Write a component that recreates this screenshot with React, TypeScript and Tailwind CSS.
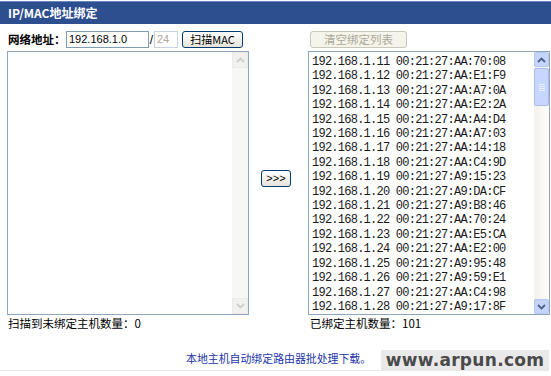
import React from "react";

const rows: [string, string][] = [
  ["11", "AA:70:08"],
  ["12", "AA:E1:F9"],
  ["13", "AA:A7:0A"],
  ["14", "AA:E2:2A"],
  ["15", "AA:A4:D4"],
  ["16", "AA:A7:03"],
  ["17", "AA:14:18"],
  ["18", "AA:C4:9D"],
  ["19", "A9:15:23"],
  ["20", "A9:DA:CF"],
  ["21", "A9:B8:46"],
  ["22", "AA:70:24"],
  ["23", "AA:E5:CA"],
  ["24", "AA:E2:00"],
  ["25", "A9:95:48"],
  ["26", "A9:59:E1"],
  ["27", "AA:C4:98"],
  ["28", "A9:17:8F"],
];

function Chevron({ up, color }: { up: boolean; color: string }) {
  return (
    <svg width="9" height="6" viewBox="0 0 9 6">
      <path
        d={up ? "M1 5 L4.5 1.5 L8 5" : "M1 1 L4.5 4.5 L8 1"}
        fill="none"
        stroke={color}
        strokeWidth="1.8"
      />
    </svg>
  );
}

export default function App() {
  return (
    <div className="relative w-[551px] h-[376px] overflow-hidden bg-white text-black font-['Noto_Sans_CJK_SC','Liberation_Sans',sans-serif]">
      {/* header */}
      <div className="mt-[1px] h-[23px] bg-[#2d4e8f] border-t border-[#6686c4] flex items-center pl-[8px]">
        <span className="text-white font-bold text-[12px] leading-none">IP/MAC地址绑定</span>
      </div>

      <div className="flex pl-[7px] pt-[7px]">
        {/* left column */}
        <div className="w-[242px] flex flex-col">
          <div className="h-[17px] flex items-center">
            <span className="pl-[1px] w-[59px] text-[11.5px] font-bold leading-none">网络地址：</span>
            <div className="w-[83px] h-[17px] border border-[#7f9db9] bg-white flex items-center pl-[2px] text-[11px] leading-none font-['Liberation_Sans',sans-serif]">
              192.168.1.0
            </div>
            <span className="w-[5px] text-[12px] leading-none text-center font-['Liberation_Sans',sans-serif]">/</span>
            <div className="w-[24px] h-[17px] border border-[#c9d3dd] bg-white flex items-center pl-[2px] text-[11px] leading-none text-[#aca899] font-['Liberation_Sans',sans-serif]">
              24
            </div>
            <div className="ml-[4px] w-[61px] h-[17px] rounded-[3px] border border-[#003c74] bg-gradient-to-b from-white to-[#e6e4da] flex items-center justify-center text-[11px] leading-none">
              扫描MAC
            </div>
          </div>
          <div className="mt-[3px] h-[264px] border border-[#8ea6bf] bg-white flex justify-end">
            <div className="w-[16px] h-full bg-[#f7f7f4] flex flex-col justify-between">
              <div className="h-[16px] bg-[#f1f1ed] border border-[#ecebe6] flex items-center justify-center">
                <Chevron up color="#cfcfc8" />
              </div>
              <div className="h-[16px] bg-[#f1f1ed] border border-[#ecebe6] flex items-center justify-center">
                <Chevron up={false} color="#cfcfc8" />
              </div>
            </div>
          </div>
          <div className="mt-[1px] pl-[1px] text-[11.5px] leading-[14px]">扫描到未绑定主机数量：0</div>
        </div>

        {/* middle */}
        <div className="w-[59px] pl-[12px] pt-[139px]">
          <div className="w-[30px] h-[17px] rounded-[3px] border border-[#003c74] bg-gradient-to-b from-white to-[#e6e4da] flex items-center justify-center text-[11px] leading-none font-['Liberation_Sans',sans-serif]">
            &gt;&gt;&gt;
          </div>
        </div>

        {/* right column */}
        <div className="w-[242px] flex flex-col">
          <div className="h-[17px] pl-[2px]">
            <div className="w-[97px] h-[17px] rounded-[3px] border border-[#c9c7ba] bg-[#f5f4ea] flex items-center justify-center text-[11.5px] leading-none text-[#aca899]">
              清空绑定列表
            </div>
          </div>
          <div className="mt-[3px] h-[264px] border border-[#8ea6bf] bg-white flex">
            <div className="flex-1 min-w-0 pl-[3px] pt-[3px] overflow-hidden text-[#1a1a1a] font-['Liberation_Mono','DejaVu_Sans_Mono',monospace]">
              {rows.map(([ip, mac]) => (
                <div key={ip} className="whitespace-pre text-[12px] tracking-[-0.75px] leading-[14.4px]">{`192.168.1.${ip} 00:21:27:${mac}`}</div>
              ))}
            </div>
            <div className="w-[15px] shrink-0 h-full bg-gradient-to-r from-[#f3f1ea] to-[#fefefb] flex flex-col">
              <div className="h-[15px] rounded-[2px] bg-[#c4d4fb] border border-[#b4c6f2] flex items-center justify-center">
                <Chevron up color="#4d6185" />
              </div>
              <div className="mt-[1px] h-[38px] rounded-[2px] bg-[#c6d6fc] border border-[#a9bdea] flex flex-col items-center justify-center gap-[1px]">
                <div className="w-[6px] h-[1px] bg-[#e8eefe]" />
                <div className="w-[6px] h-[1px] bg-[#e8eefe]" />
                <div className="w-[6px] h-[1px] bg-[#e8eefe]" />
                <div className="w-[6px] h-[1px] bg-[#e8eefe]" />
              </div>
              <div className="flex-1" />
              <div className="h-[15px] rounded-[2px] bg-[#c4d4fb] border border-[#b4c6f2] flex items-center justify-center">
                <Chevron up={false} color="#4d6185" />
              </div>
            </div>
          </div>
          <div className="mt-[1px] pl-[2px] text-[11.5px] leading-[14px]">已绑定主机数量：101</div>
        </div>
      </div>

      {/* bottom link */}
      <div className="mt-[21px] pl-[186px] text-[10.9px] leading-[14px] text-[#2233aa]">
        本地主机自动绑定路由器批处理下载。
      </div>
      <div className="mt-[5px] h-[1px] w-[380px] bg-[#e4e4e4]" />

      {/* watermark */}
      <div className="absolute left-[381px] top-[350px] w-[168px] h-[21px] bg-[#e9e9e9] flex items-center justify-center text-[17px] font-bold text-[#4a4a4a] leading-none tracking-[0.3px] font-['DejaVu_Sans',Verdana,sans-serif]">
        www.arpun.com
      </div>
    </div>
  );
}
